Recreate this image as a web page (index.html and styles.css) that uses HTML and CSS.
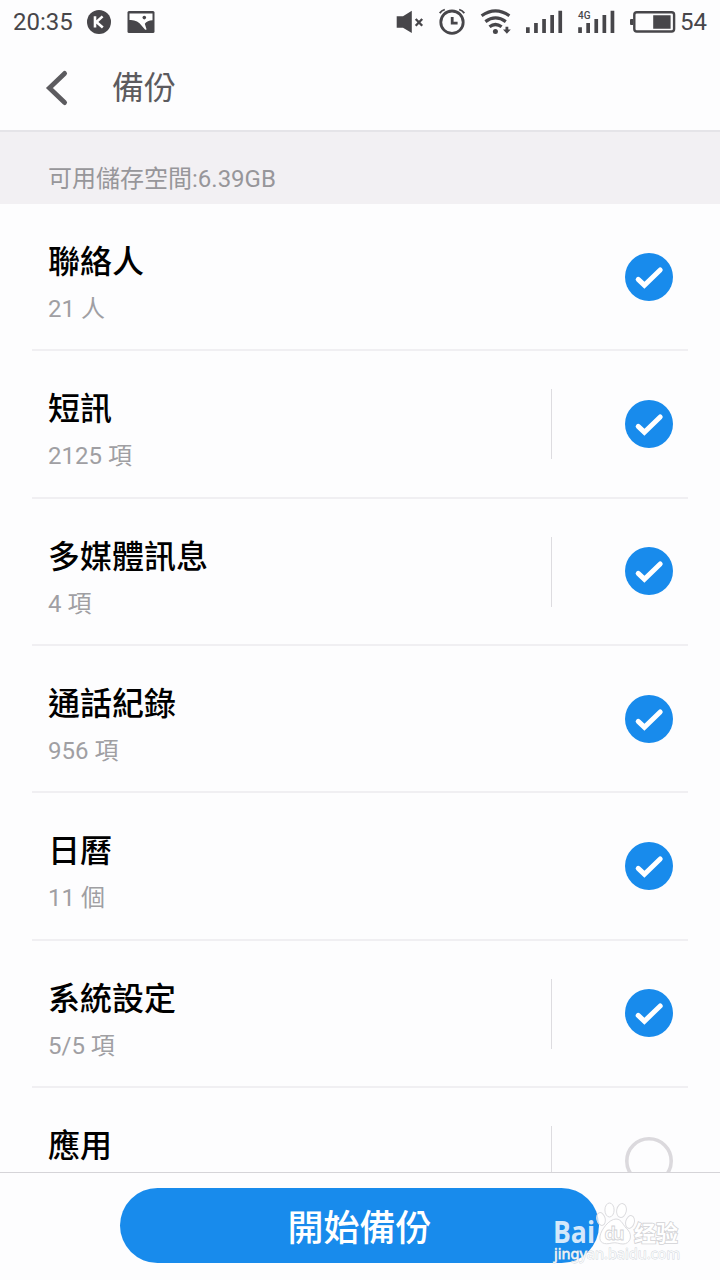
FILE: index.html
```html
<!DOCTYPE html>
<html lang="zh-Hant">
<head>
<meta charset="utf-8">
<title>備份</title>
<link rel="stylesheet" href="styles.css">
</head>
<body>
<svg class="defs" width="0" height="0">
  <symbol id="check" viewBox="0 0 48 48">
    <circle cx="24" cy="24" r="24" fill="#188bec"/>
    <path d="M13.2 26.4L19.4 32.2L35.2 17" fill="none" stroke="#fff" stroke-width="5" stroke-linecap="round"/>
  </symbol>
</svg>
<div class="screen">
  <div class="status">
    <span class="time">20:35</span>
    <svg class="badge" width="24" height="24" viewBox="0 0 24 24"><circle cx="12" cy="12" r="12"/><path d="M8 6.2V17.5M15.6 6.4L9.4 12L15.8 17.5" fill="none" stroke="#fff" stroke-width="2.6"/></svg>
    <svg class="photo" width="28" height="22" viewBox="0 0 28 22"><rect x=".5" width="27" height="22" rx="1.5"/><path d="M2.5 2.5H25.5V9.2C22 9.3 19.5 10.5 17.8 12.8L19.6 18.6L18.2 18.8L14.5 14.6C12 10.7 7.5 8.6 2.5 9.1Z" fill="#fff"/><circle cx="17.3" cy="6.6" r="1.8"/></svg>
    <div class="indicators">
      <svg width="28" height="32" viewBox="0 0 28 32"><path d="M.7 10.2H7L15.8 4.8V27L7 21.8H.7Z"/><path d="M19.7 13L26.2 19.8M26.2 13L19.7 19.8" stroke="#47464a" stroke-width="2.3"/></svg>
      <svg width="28" height="32" viewBox="0 0 28 32"><g fill="none" stroke="#47464a"><circle cx="14" cy="16.2" r="11.2" stroke-width="2.8"/><path d="M14.2 11V17.2H19.6" stroke-width="2.8"/><path d="M1.7 7.1Q3.6 4.6 6.8 3.5M21.2 3.5Q24.4 4.6 26.3 7.1" stroke-width="1.8"/></g></svg>
      <svg width="32" height="32" viewBox="0 0 32 32"><g fill="none" stroke="#47464a" stroke-width="3.2"><path d="M1.6 9.8Q15.5 0 29.4 9.8"/><path d="M5.4 15.6Q15.5 8 25.8 15.6"/><path d="M9.5 20.8Q15.4 16.2 21.6 20.8"/></g><circle cx="15.4" cy="25.5" r="2.5"/><path d="M25.5 20.8H28.3V23.4H30.8L26.9 27.8L23 23.4H25.5Z"/></svg>
      <svg width="37" height="32" viewBox="0 0 37 32"><path d="M0 21.2H3.7V27H0ZM8.1 17H11.8V27H8.1ZM16.2 13H19.9V27H16.2ZM24.3 9H28V27H24.3ZM32.4 4.8H36.1V27H32.4Z"/></svg>
      <svg width="38" height="32" viewBox="0 0 38 32"><text class="net" x="1" y="12.6">4G</text><path d="M1.2 21.2H4.9V27H1.2ZM9.3 17H13V27H9.3ZM17.4 13H21.1V27H17.4ZM25.5 9H29.2V27H25.5ZM33.6 4.8H37.3V27H33.6Z"/></svg>
      <svg width="47" height="32" viewBox="0 0 47 32"><rect x="5.3" y="6.3" width="39.8" height="19.2" rx="2.5" fill="none" stroke="#47464a" stroke-width="2.4"/><path d="M1 14Q1 13 2 13H4.2V19H2Q1 19 1 18ZM24.2 9.3H41.6V22.7H24.2Z"/></svg>
      <span class="percent">54</span>
    </div>
  </div>
  <div class="header">
    <svg class="back" width="24" height="36" viewBox="0 0 24 36"><path d="M19.6 3.4L4.4 18L19.6 32.6" fill="none" stroke="#5c5b5f" stroke-width="4.8" stroke-linecap="round"/></svg>
    <h1>備份</h1>
  </div>
  <div class="storage">可用儲存空間:6.39GB</div>
  <div class="list">
    <div class="row"><div class="label"><div class="name">聯絡人</div><div class="count">21 人</div></div><svg class="mark"><use href="#check"/></svg></div>
    <div class="row"><div class="label"><div class="name">短訊</div><div class="count">2125 項</div></div><i class="split"></i><svg class="mark"><use href="#check"/></svg></div>
    <div class="row"><div class="label"><div class="name">多媒體訊息</div><div class="count">4 項</div></div><i class="split"></i><svg class="mark"><use href="#check"/></svg></div>
    <div class="row"><div class="label"><div class="name">通話紀錄</div><div class="count">956 項</div></div><svg class="mark"><use href="#check"/></svg></div>
    <div class="row"><div class="label"><div class="name">日曆</div><div class="count">11 個</div></div><svg class="mark"><use href="#check"/></svg></div>
    <div class="row"><div class="label"><div class="name">系統設定</div><div class="count">5/5 項</div></div><i class="split"></i><svg class="mark"><use href="#check"/></svg></div>
    <div class="row"><div class="label"><div class="name">應用</div></div><i class="split"></i><svg class="mark" viewBox="0 0 48 48"><circle cx="24" cy="24" r="22.2" fill="none" stroke="#dbd9dd" stroke-width="3.6"/></svg></div>
  </div>
  <div class="footer"><div class="button">開始備份</div></div>
  <svg class="watermark" width="134" height="70" viewBox="0 0 134 70">
    <text class="wm-brand" x="2" y="42.5" textLength="42" lengthAdjust="spacingAndGlyphs">Bai</text>
    <g fill="#fff" fill-opacity=".7" stroke="#dcdcdf" stroke-width="1" transform="translate(0 -2)">
      <ellipse cx="50" cy="21" rx="4.2" ry="6.5" transform="rotate(-15 50 21)"/>
      <ellipse cx="58.5" cy="12" rx="4.6" ry="7"/>
      <ellipse cx="70.5" cy="12.5" rx="4.8" ry="7" transform="rotate(12 70.5 12.5)"/>
      <ellipse cx="79" cy="24" rx="4.3" ry="6.5" transform="rotate(15 79 24)"/>
      <path d="M65 21C71 21 72 28 77 32C82 38 79 46 72 46C68 46 65 44 61 45C53 47 48 45 49 38C50 32 58 21 65 21Z"/>
    </g>
    <text class="wm-du" x="53.5" y="39.5" textLength="20">du</text>
    <text class="wm-cn" x="83" y="41">经验</text>
    <text class="wm-url" x="3" y="58.5" textLength="126" lengthAdjust="spacingAndGlyphs">jingyan.baidu.com</text>
  </svg>
</div>
</body>
</html>
```
FILE: styles.css
```css
* { box-sizing: border-box; }
body { margin: 0; background: #fdfdfd; font-family: Roboto, "Noto Sans CJK TC", sans-serif; }
.defs { position: absolute; }
.screen { position: relative; width: 720px; height: 1280px; overflow: hidden; display: flex; flex-direction: column; background: #fdfdfe; }
.status { display: flex; align-items: center; height: 44px; padding: 0 12px 0 13px; color: #47464a; font-size: 24px; line-height: 28px; flex: none; }
.status svg { fill: #47464a; flex: none; }
.time { width: 74px; }
.photo { margin-left: 16px; }
.indicators { display: flex; align-items: center; gap: 14px; margin-left: auto; }
.percent { width: 27px; margin-left: -10px; margin-right: 1px; }
.net { font-size: 10px; font-weight: 500; }
.header { display: flex; align-items: center; gap: 43px; height: 88px; padding-left: 45px; border-bottom: 2px solid #e5e4e8; flex: none; }
.back { margin-top: 2px; }
.header h1 { margin: 2px 0 0; font-size: 32px; line-height: 44px; font-weight: 400; color: #5c5b5f; }
.storage { height: 72px; padding: 29px 0 0 48px; flex: none; background: #f2f0f3; color: #97969a; font-size: 24px; line-height: 36px; font-weight: 400; }
.list { height: 967.5px; flex: none; overflow: hidden; padding: 0 32px; }
.row { display: flex; align-items: flex-start; height: 147.35px; padding: 0 15px 0 16px; border-bottom: 2px solid #f0eff2; }
.label { flex: 1; padding-top: 36px; }
.name { font-size: 32px; line-height: 44px; font-weight: 500; color: #000; }
.count { margin-top: 7px; font-size: 24px; line-height: 36px; font-weight: 400; color: #a09fa3; }
.split { width: 1px; height: 70px; margin: 38px 73px 0 0; background: #dddce0; }
.mark { width: 48px; height: 48px; margin-top: 48.5px; flex: none; }
.footer { position: relative; flex: 1; padding: 15px 0 0 120px; border-top: 1px solid #d5d4d8; background: #fdfdfe; }
.button { width: 479px; height: 75px; border-radius: 38px; background: #188bec; color: #fff; text-align: center; font-size: 36px; line-height: 82px; font-weight: 500; }
.watermark { position: absolute; left: 551px; top: 1200px; }
.wm-brand { font: bold 30px "Open Sans", sans-serif; fill: #d4e8fb; }
.wm-du { font: bold 18px "Open Sans", sans-serif; fill: #fff; stroke: #d2d2d5; stroke-width: .8; }
.wm-cn { font: bold 22px "Noto Sans CJK SC", sans-serif; fill: #fff; stroke: #d2d2d5; stroke-width: 1.6; paint-order: stroke; }
.wm-url { font: 14px "Noto Sans", sans-serif; fill: #fff; fill-opacity: .85; stroke: #d0d5db; stroke-width: .8; paint-order: stroke; }
```
